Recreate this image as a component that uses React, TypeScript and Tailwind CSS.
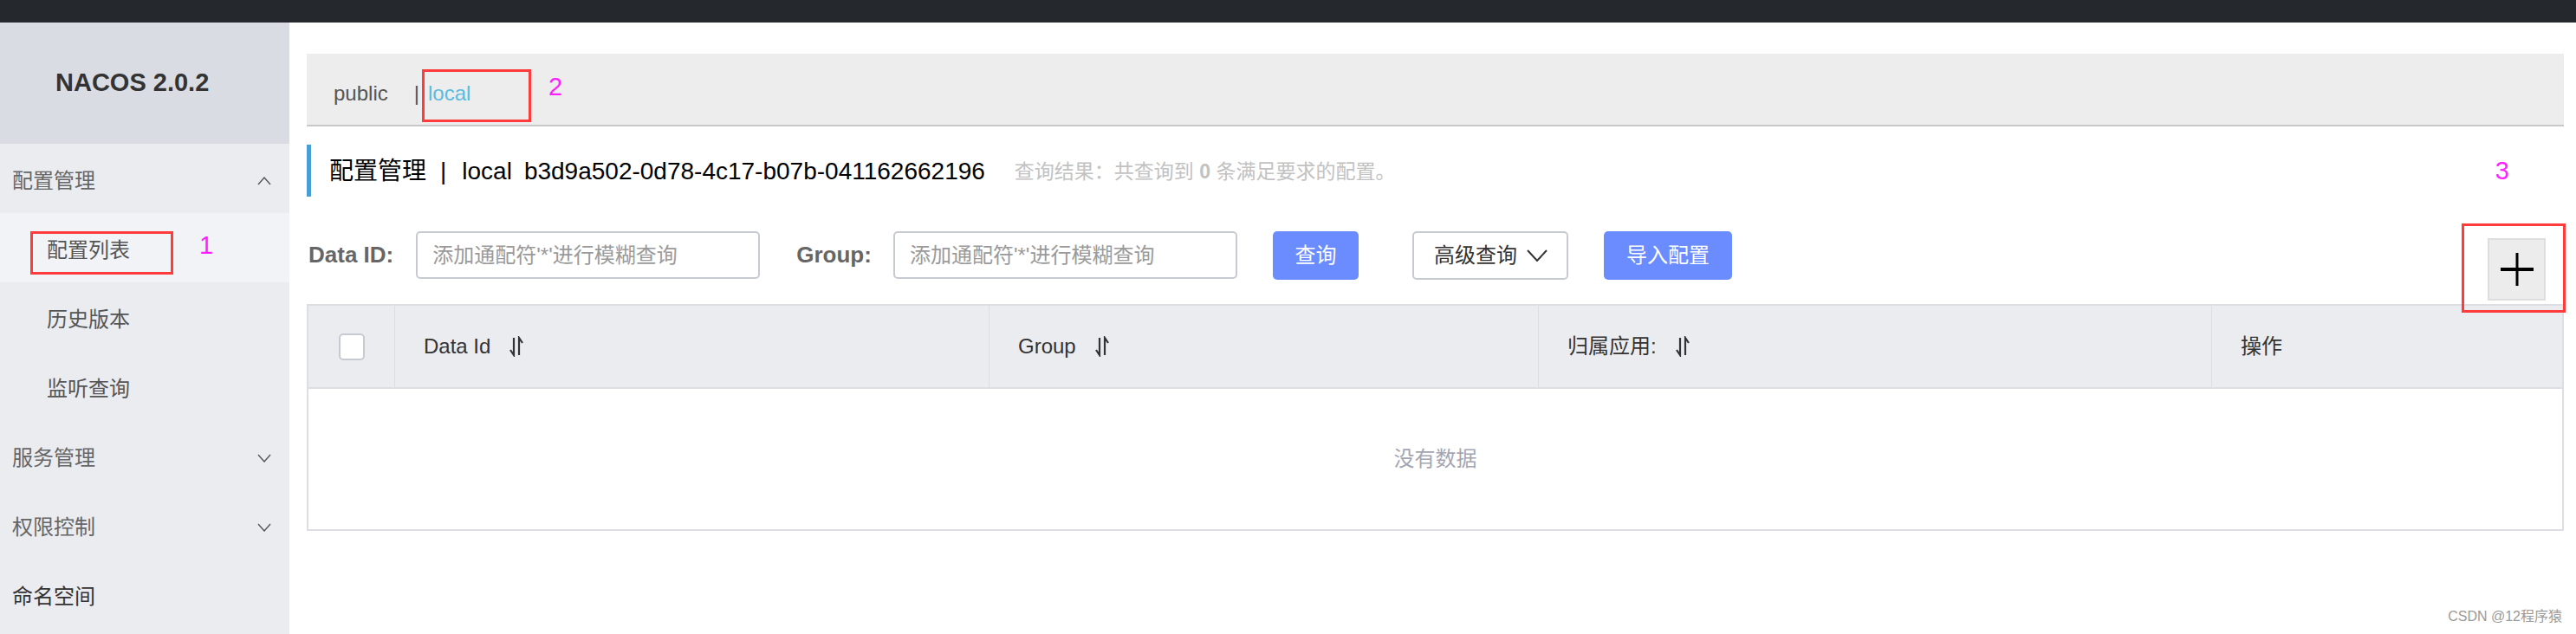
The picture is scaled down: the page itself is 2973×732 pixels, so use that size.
import React from 'react';

const FONT = { fontFamily: '"Liberation Sans", "Noto Sans CJK SC", sans-serif' };

function Chevron({ up }: { up?: boolean }) {
  return (
    <svg width="16" height="10" viewBox="0 0 16 10" className="text-[#555]">
      <path
        d={up ? 'M1 9 L8 1 L15 9' : 'M1 1 L8 9 L15 1'}
        fill="none"
        stroke="currentColor"
        strokeWidth="1.4"
      />
    </svg>
  );
}

function SortIcon() {
  return (
    <svg width="20" height="24" viewBox="0 0 20 24" className="ml-[20px] text-[#333]">
      <path d="M7 2 V22 L3 16" fill="none" stroke="currentColor" strokeWidth="2.2" />
      <path d="M13 22 V2 L17 8" fill="none" stroke="currentColor" strokeWidth="2.2" />
    </svg>
  );
}

function Sidebar() {
  const row = 'h-[80px] flex items-center pt-[5px] text-[24px]';
  return (
    <aside className="w-[334px] shrink-0 bg-[#ebecf0] flex flex-col">
      <div className="h-[140px] bg-[#d9dce3] flex items-center pl-[64px]">
        <span className="text-[29px] font-bold text-[#333]">NACOS 2.0.2</span>
      </div>
      <div className={`${row} justify-between pl-[14px] pr-[21px] text-[#666]`}>
        <span>配置管理</span>
        <Chevron up />
      </div>
      <div className={`${row} relative pl-[54px] bg-[#f2f3f6] text-[#555]`}>
        <span>配置列表</span>
        <div className="absolute left-[35px] top-[21px] w-[165px] h-[50px] border-[3px] border-[#ff3b3b]" />
        <span className="absolute left-[230px] top-[16px] text-[29px] text-[#ff1fff]">1</span>
      </div>
      <div className={`${row} pl-[54px] text-[#555]`}>历史版本</div>
      <div className={`${row} pl-[54px] text-[#555]`}>监听查询</div>
      <div className={`${row} justify-between pl-[14px] pr-[21px] text-[#666]`}>
        <span>服务管理</span>
        <Chevron />
      </div>
      <div className={`${row} justify-between pl-[14px] pr-[21px] text-[#666]`}>
        <span>权限控制</span>
        <Chevron />
      </div>
      <div className={`${row} pl-[14px] text-[#333]`}>命名空间</div>
    </aside>
  );
}

function NamespaceBar() {
  return (
    <div className="relative mt-[36px] h-[84px] bg-[#ededed] border-b-2 border-[#c9c9c9] flex items-center pt-[10px] pl-[31px] text-[24px]">
      <span className="text-[#555]">public</span>
      <span className="ml-[30px] text-[#555]">|</span>
      <span className="ml-[10px] text-[#5bbbe0]">local</span>
      <div className="absolute left-[133px] top-[18px] w-[126px] h-[61px] border-[3px] border-[#ff3b3b]" />
      <span className="absolute left-[279px] top-[24px] text-[29px] leading-none text-[#ff1fff]">2</span>
    </div>
  );
}

function Title() {
  return (
    <div className="mt-[21px] flex items-center h-[60px]">
      <div className="w-[5px] h-[60px] bg-[#4a9ed6]" />
      <div className="ml-[21px] flex items-center pt-[2px] text-[28px] text-black">
        <span>配置管理</span>
        <span className="ml-[16px]">|</span>
        <span className="ml-[18px]">local</span>
        <span className="ml-[14px]">b3d9a502-0d78-4c17-b07b-041162662196</span>
      </div>
      <span className="ml-[34px] pt-[2px] text-[23px] text-[#c2c2c2]">
        查询结果：共查询到 <b className="font-bold">0</b> 条满足要求的配置。
      </span>
    </div>
  );
}

function SearchRow() {
  const input =
    'w-[397px] h-[55px] border-2 border-[#c8cad2] rounded-[5px] flex items-center pl-[17px] text-[24px] text-[#9a9a9a]';
  return (
    <div className="relative mt-[40px] flex justify-between">
      <div className="flex items-center h-[55px]">
        <span className="ml-[2px] text-[26px] font-bold text-[#666]">Data ID:</span>
        <div className={`ml-[26px] ${input}`}>添加通配符'*'进行模糊查询</div>
        <span className="ml-[42px] text-[26px] font-bold text-[#666]">Group:</span>
        <div className={`ml-[25px] ${input}`}>添加通配符'*'进行模糊查询</div>
        <button className="ml-[41px] w-[99px] h-[56px] rounded-[5px] bg-[#6a8cff] text-white text-[24px]">
          查询
        </button>
        <button className="ml-[62px] w-[180px] h-[56px] rounded-[5px] border-2 border-[#c8cad2] bg-white text-[#333] text-[24px] flex items-center pl-[23px]">
          <span>高级查询</span>
          <svg width="24" height="14" viewBox="0 0 24 14" className="ml-[11px]">
            <path d="M1 1 L12 13 L23 1" fill="none" stroke="#333" strokeWidth="2" />
          </svg>
        </button>
        <button className="ml-[41px] w-[148px] h-[56px] rounded-[5px] bg-[#6a8cff] text-white text-[24px]">
          导入配置
        </button>
      </div>
      <div className="mt-[8px] mr-[21px] w-[67px] h-[72px] bg-[#ececec] border-2 border-[#dedede] flex items-center justify-center">
        <svg width="40" height="40" viewBox="0 0 40 40">
          <path d="M20 1 V39" stroke="#000" strokeWidth="3" />
          <path d="M1 20 H39" stroke="#000" strokeWidth="4" />
        </svg>
      </div>
      <div className="absolute right-[-2px] top-[-9px] w-[120px] h-[103px] border-[3px] border-[#ff3b3b]" />
      <span className="absolute right-[63px] top-[-84px] text-[29px] leading-none text-[#ff1fff]">3</span>
    </div>
  );
}

function Table() {
  const cell = 'flex items-center pl-[33px] text-[24px] text-[#333] border-l border-[#dcdee3]';
  return (
    <div className="mt-[4px] border-2 border-[#dcdee3]">
      <div className="grid grid-cols-[99px_686px_634px_777px_1fr] h-[96px] bg-[#ebecf0] border-b-2 border-[#dcdee3]">
        <div className="flex items-center justify-center">
          <div className="w-[30px] h-[31px] rounded-[5px] border-2 border-[#c8cad2] bg-white" />
        </div>
        <div className={cell}>
          <span>Data Id</span>
          <SortIcon />
        </div>
        <div className={cell}>
          <span>Group</span>
          <SortIcon />
        </div>
        <div className={cell}>
          <span>归属应用:</span>
          <SortIcon />
        </div>
        <div className={cell}>操作</div>
      </div>
      <div className="h-[162px] bg-white flex items-center justify-center text-[24px] text-[#a3a6b2]">
        没有数据
      </div>
    </div>
  );
}

export default function App() {
  return (
    <div className="relative w-[2973px] h-[732px] overflow-hidden bg-white flex flex-col" style={FONT}>
      <div className="h-[26px] shrink-0 bg-[#25282d]" />
      <div className="flex flex-1">
        <Sidebar />
        <main className="flex-1 pl-[20px] pr-[14px]">
          <NamespaceBar />
          <Title />
          <SearchRow />
          <Table />
        </main>
      </div>
      <span className="absolute right-[16px] bottom-[8px] text-[16px] text-[#9a9a9a]">CSDN @12程序猿</span>
    </div>
  );
}
